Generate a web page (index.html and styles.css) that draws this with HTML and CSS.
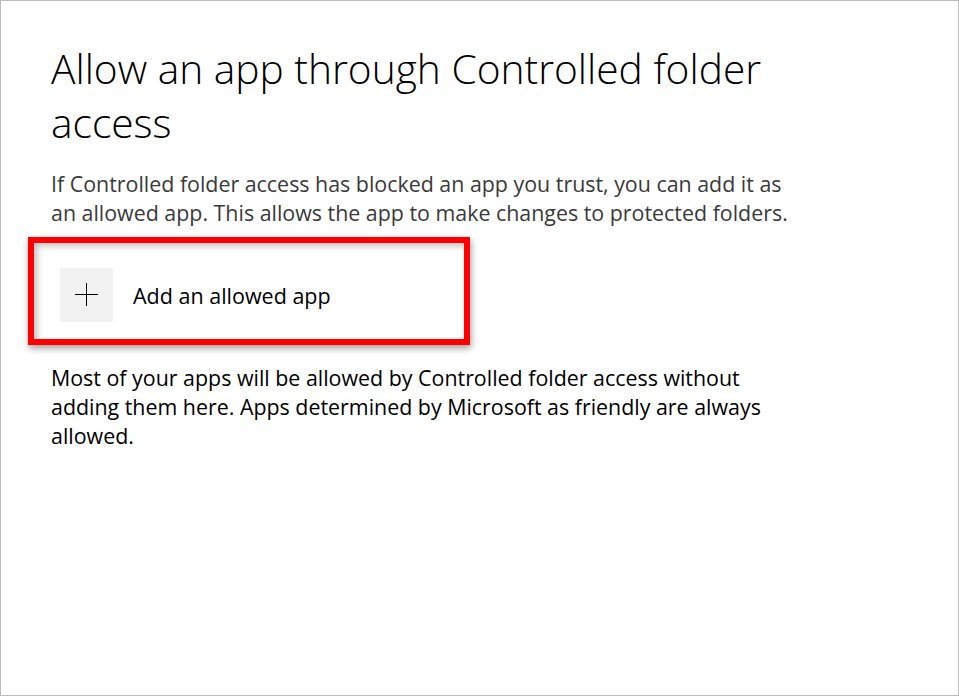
FILE: index.html
```html
<!DOCTYPE html>
<html lang="en">
<head>
<meta charset="utf-8">
<title>Allow an app through Controlled folder access</title>
<link rel="stylesheet" href="styles.css">
</head>
<body>
<div class="frame">
  <main class="content">
    <h1 class="title">Allow an app through Controlled folder access</h1>
    <p class="desc">If Controlled folder access has blocked an app you trust, you can add it as an allowed app. This allows the app to make changes to protected folders.</p>
    <div class="highlight">
      <button class="add-btn" type="button">
        <span class="add-icon">
          <svg width="23" height="23" viewBox="0 0 23 23" aria-hidden="true">
            <path d="M11.5 0V23M0 11.5H23" stroke="#000" stroke-width="1" fill="none" shape-rendering="crispEdges"/>
          </svg>
        </span>
        <span class="add-label">Add an allowed app</span>
      </button>
    </div>
    <p class="note">Most of your apps will be allowed by Controlled folder access without adding them here. Apps determined by Microsoft as friendly are always allowed.</p>
  </main>
</div>
</body>
</html>
```

FILE: styles.css
```css
* { box-sizing: border-box; }
html, body { margin: 0; padding: 0; background: #fff; }
body { font-family: "Open Sans", "Noto Sans", sans-serif; color: #000; }
.frame {
  width: 959px;
  height: 696px;
  border: 1px solid #bdbdbd;
  overflow: hidden;
}
.content {
  padding: 40px 0 0 50px;
}
.title {
  margin: 0;
  font-weight: 300;
  font-size: 40.7px;
  line-height: 54px;
  max-width: 760px;
  color: #000;
}
.desc {
  margin: 20px 0 0;
  font-size: 21.4px;
  line-height: 29px;
  color: #3a3a3a;
  max-width: 760px;
}
.highlight {
  margin: 10px 0 0 -23px;
  width: 442px;
  height: 108px;
  border: 6px solid #ff0000;
  box-shadow: 1px 3px 7px rgba(0,0,0,0.4), inset 3px 3px 6px rgba(0,0,0,0.25);
  padding: 25px 0 0 26px;
}
.add-btn {
  display: flex;
  align-items: center;
  gap: 20px;
  border: 0;
  background: none;
  padding: 0;
  font: inherit;
  cursor: pointer;
}
.add-icon {
  width: 53px;
  height: 54px;
  background: #f2f2f2;
  display: flex;
  justify-content: flex-start;
  align-items: flex-start;
  padding: 15px 0 0 15px;
}
.add-icon svg { display: block; }
.add-label {
  font-size: 21.5px;
  color: #000;
}
.note {
  margin: 18px 0 0;
  font-size: 21.4px;
  line-height: 29px;
  color: #000;
  max-width: 760px;
}
```
